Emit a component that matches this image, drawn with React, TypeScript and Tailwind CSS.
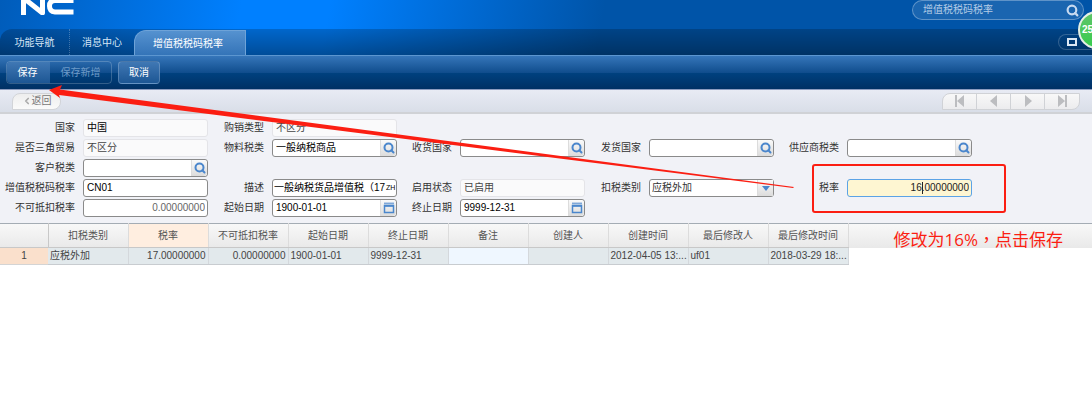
import type { ReactNode } from 'react';
import { Search, ChevronLeft } from 'lucide-react';

type FieldKind = 'text' | 'readonly' | 'lookup' | 'date' | 'select' | 'active';

type FieldDef = {
  id: string;
  label: string;
  value?: string;
  kind: FieldKind;
  align?: 'right';
  suffix?: string;
  strong?: boolean;
};

const formRows: FieldDef[][] = [
  [
    { id: 'country', label: '国家', value: '中国', kind: 'readonly', strong: true },
    { id: 'tradeType', label: '购销类型', value: '不区分', kind: 'readonly' },
  ],
  [
    { id: 'triangular', label: '是否三角贸易', value: '不区分', kind: 'readonly' },
    { id: 'materialTax', label: '物料税类', value: '一般纳税商品', kind: 'lookup' },
    { id: 'receiveCountry', label: '收货国家', kind: 'lookup' },
    { id: 'sendCountry', label: '发货国家', kind: 'lookup' },
    { id: 'supplierTax', label: '供应商税类', kind: 'lookup' },
  ],
  [{ id: 'customerTax', label: '客户税类', kind: 'lookup' }],
  [
    { id: 'taxCode', label: '增值税税码税率', value: 'CN01', kind: 'text' },
    { id: 'description', label: '描述', value: '一般纳税货品增值税（17', kind: 'text', suffix: 'ZH' },
    { id: 'status', label: '启用状态', value: '已启用', kind: 'readonly' },
    { id: 'deductType', label: '扣税类别', value: '应税外加', kind: 'select' },
    { id: 'taxRate', label: '税率', value: '16.00000000', kind: 'active', align: 'right' },
  ],
  [
    { id: 'nonDeduct', label: '不可抵扣税率', value: '0.00000000', kind: 'text', align: 'right' },
    { id: 'startDate', label: '起始日期', value: '1900-01-01', kind: 'date' },
    { id: 'endDate', label: '终止日期', value: '9999-12-31', kind: 'date' },
  ],
];

const columns = [
  '扣税类别',
  '税率',
  '不可抵扣税率',
  '起始日期',
  '终止日期',
  '备注',
  '创建人',
  '创建时间',
  '最后修改人',
  '最后修改时间',
];

const record = [
  '应税外加',
  '17.00000000',
  '0.00000000',
  '1900-01-01',
  '9999-12-31',
  '',
  '',
  '2012-04-05 13:...',
  'uf01',
  '2018-03-29 18:...',
];

const pagerIcons = [
  { name: '第一条', path: 'M1 0h2v12H1zM10 0v12L3 6z' },
  { name: '上一条', path: 'M9 0v12L2 6z' },
  { name: '下一条', path: 'M3 0v12l7-6z' },
  { name: '最后一条', path: 'M2 0v12l7-6zM9 0h2v12H9z' },
];

function CalendarIcon() {
  return (
    <svg width="12" height="12" viewBox="0 0 12 12" fill="none" stroke="#4a86cc" strokeWidth="1.5">
      <path d="M1 1.2h10" strokeWidth="1" />
      <path d="M1.5 3.5h9v7h-9z" />
      <path d="M1 3.8h10" strokeWidth="2" />
    </svg>
  );
}

function AddonButton({ label, children }: { label: string; children: ReactNode }) {
  return (
    <button
      type="button"
      aria-label={label}
      className="flex w-4 shrink-0 items-center justify-center rounded-r-sm border-l border-[#dcdcdc] bg-gradient-to-b from-[#fafafa] to-[#dcdcdc]"
    >
      {children}
    </button>
  );
}

function Field({ field }: { field: FieldDef }) {
  const { id, label, value = '', kind, align, suffix, strong } = field;
  const frame =
    kind === 'readonly'
      ? 'border-[#e4e4e8] bg-[#fafafb]'
      : kind === 'active'
        ? 'border-[#5ba3e6] bg-[#fef6d2] text-[#222]'
        : 'border-[#8a8a8a] bg-white text-black';
  const padding = align === 'right' ? 'pr-0.5 text-right' : suffix ? 'pl-px' : 'pl-[3px]';

  return (
    <>
      <label htmlFor={id} className="whitespace-nowrap text-right text-[#333]">
        {label}
      </label>
      <div
        className={`relative flex h-[18px] rounded-[3px] border ${frame} ${
          kind === 'readonly' ? (strong ? 'text-black' : 'text-[#444]') : ''
        }`}
      >
        {kind === 'select' ? (
          <>
            <select id={id} defaultValue={value} className="w-full appearance-none pl-0.5 text-[#333] outline-none">
              <option>{value}</option>
            </select>
            <span className="pointer-events-none absolute inset-y-0 right-0 flex w-4 items-center justify-center border-l border-[#dcdcdc] bg-gradient-to-b from-[#fafafa] to-[#dcdcdc]">
              <svg width="8" height="5" viewBox="0 0 8 5" fill="#4a86cc">
                <path d="M0 0h8L4 5z" />
              </svg>
            </span>
          </>
        ) : (
          <input
            id={id}
            defaultValue={value}
            readOnly={kind === 'readonly'}
            className={`min-w-0 flex-1 outline-none ${padding} ${id === 'nonDeduct' ? 'text-[#666]' : ''}`}
          />
        )}
        {suffix && <span className="w-[10px] shrink-0 text-[7px] leading-4">{suffix}</span>}
        {kind === 'lookup' && (
          <AddonButton label={`选择${label}`}>
            <Search size={12} strokeWidth={4} className="text-[#4a86cc]" />
          </AddonButton>
        )}
        {kind === 'date' && (
          <AddonButton label={`选择${label}`}>
            <CalendarIcon />
          </AddonButton>
        )}
        {kind === 'active' && (
          <>
            <span className="absolute right-12 top-0.5 h-3 w-px bg-[#222]" />
            <span className="pointer-events-none absolute -left-9 -top-4 h-[49px] w-[194px] rounded-[3px] border-2 border-[#fb1e12]" />
          </>
        )}
      </div>
    </>
  );
}

function Header() {
  return (
    <header className="bg-[linear-gradient(100deg,#005cba,#0080ff_22%,#0080ff_30%,#0054a8_55%)]">
      <div className="flex h-[29px] items-start justify-between pl-5 pr-2">
        <svg width="54" height="15" viewBox="0 0 54 15" fill="none" stroke="#fff" strokeWidth="5" aria-label="NC">
          <path d="M3.5 15V-2L22.5 13V-2" strokeLinejoin="round" />
          <path d="M53.500 0.500H35Q29.500 0.500 29.500 6T35 12H53.500" />
        </svg>
        <div className="flex h-5 w-[172px] items-center rounded-full border border-white/30 bg-white/10 pl-2.5 pr-1">
          <input
            aria-label="搜索"
            defaultValue="增值税税码税率"
            className="min-w-0 flex-1 text-[#b4cce6] outline-none"
          />
          <button type="button" aria-label="搜索">
            <Search size={13} strokeWidth={4} className="text-[#c8daf0]" />
          </button>
        </div>
      </div>

      <div className="flex h-[26px] items-stretch rounded-tl-xl bg-gradient-to-b from-black/20 to-black/40">
        <nav className="flex flex-1 items-stretch text-[#d6e6f6]">
          <a href="#nav" className="flex w-[69px] items-center justify-center pt-0.5">
            功能导航
          </a>
          <a href="#messages" className="flex w-[65px] items-center justify-center border-l border-dotted border-white/25 pt-0.5">
            消息中心
          </a>
          <a
            href="#tax"
            className="mt-px flex w-28 items-center justify-center rounded-tl-xl border border-b-0 border-[#6ea3d8] bg-gradient-to-b from-[#5592d0] to-[#3474b8] pr-1 pt-0.5 text-white"
          >
            增值税税码税率
          </a>
        </nav>
        <button
          type="button"
          aria-label="还原窗口"
          className="mt-[5px] flex h-4 w-[34px] items-center rounded-l-full border border-r-0 border-white/20 pl-2"
        >
          <span className="h-2 w-[10px] border-2 border-[#dce8f4]" />
        </button>
      </div>
    </header>
  );
}

function Toolbar() {
  return (
    <div className="flex h-[34px] items-center gap-1.5 border-t border-[#5c96d0] bg-[linear-gradient(#3676ba,#0f4c8c_52%,#00417f_52%,#003064)] pl-1.5 text-white">
      <div className="flex h-[23px] rounded border border-white/20">
        <button type="button" className="w-[43px] rounded-l bg-gradient-to-b from-[#4078b4] to-[#1c5694] pr-0.5">
          保存
        </button>
        <button type="button" disabled className="w-[61px] text-[#6f9bc8]">
          保存新增
        </button>
      </div>
      <button
        type="button"
        className="h-[23px] w-[42px] rounded border border-white/20 bg-gradient-to-b from-[#4078b4] to-[#1c5694]"
      >
        取消
      </button>
    </div>
  );
}

function RecordBar() {
  return (
    <div className="flex h-[25px] items-center justify-between border-b-2 border-t border-b-[#d0d2d6] border-t-[#8c9cc0] bg-gradient-to-b from-[#e8ebf4] to-[#d9dee8] px-3">
      <button
        type="button"
        className="flex h-[17px] w-[49px] items-center justify-center rounded-tl-lg rounded-br-lg rounded-tr-lg border border-[#d2d4d8] bg-gradient-to-b from-[#eeeeee] to-[#fafafa] text-[#777]"
      >
        <ChevronLeft size={10} strokeWidth={4} className="text-[#aaa]" />
        返回
      </button>
      <div className="flex h-[17px] divide-x divide-[#d0d2d6] overflow-hidden rounded-tl-lg rounded-br-lg border border-[#d0d2d6] bg-gradient-to-b from-[#f8f8f8] to-[#ececee]">
        {pagerIcons.map((icon) => (
          <button key={icon.name} type="button" aria-label={icon.name} className="flex w-[34px] items-center justify-center">
            <svg width="12" height="12" viewBox="0 0 12 12" fill="#bcbdc0">
              <path d={icon.path} />
            </svg>
          </button>
        ))}
      </div>
    </div>
  );
}

function RecordTable() {
  return (
    <table className="w-full table-fixed border-collapse border-t border-[#a4acb4] text-[#444]">
      <colgroup>
        <col className="w-12" />
        {columns.map((name) => (
          <col key={name} className="w-20" />
        ))}
        <col />
      </colgroup>
      <thead>
        <tr className="h-6 bg-gradient-to-b from-[#f8f8f8] to-[#e9e9e9]">
          <th className="border-b border-r border-[#c8c8c8]" />
          {columns.map((name) => (
            <th
              key={name}
              className={`whitespace-nowrap border-b border-r border-b-[#c8c8c8] border-r-[#dcdcdc] font-normal text-[#555] ${
                name === '税率' ? 'bg-[#ffeee0]' : ''
              }`}
            >
              {name}
            </th>
          ))}
          <th className="relative">
            <span className="absolute left-[45px] top-1 whitespace-nowrap font-['Open_Sans','Noto_Sans_CJK_TC',sans-serif] text-[17px] font-normal leading-6 text-[#fb1e12]">
              修改为16%，点击保存
            </span>
          </th>
        </tr>
      </thead>
      <tbody>
        <tr className="h-[17px]">
          <td className="border-b border-[#d4d4d4] bg-[#fae0cc] text-center">1</td>
          {record.map((cell, index) => (
            <td
              key={index}
              className={`whitespace-nowrap border-b border-r border-b-[#c8ccd0] border-r-[#d4d8dc] px-0.5 ${
                index === 5 ? 'bg-[#eff7ff]' : 'bg-[#e2e9ec]'
              } ${index === 1 || index === 2 ? 'text-right' : ''}`}
            >
              {cell}
            </td>
          ))}
          <td />
        </tr>
      </tbody>
    </table>
  );
}

export default function App() {
  return (
    <div className="relative min-h-screen overflow-hidden bg-white font-['Liberation_Sans','Noto_Sans_CJK_SC',sans-serif] text-[10px] leading-4">
      <Header />
      <Toolbar />
      <RecordBar />

      <form className="flex flex-col gap-0.5 bg-[#f1f2f7] pb-1.5 pt-[5px]">
        {formRows.map((row) => (
          <div
            key={row[0].id}
            className="grid grid-cols-[75px_125px_48px_125px_47px_125px_48px_125px_57px_125px] items-center gap-x-2"
          >
            {row.map((field) => (
              <Field key={field.id} field={field} />
            ))}
          </div>
        ))}
      </form>

      <RecordTable />

      <div className="absolute -right-6 top-[11px] flex size-[38px] items-center rounded-full border-2 border-[#e4efe4] bg-gradient-to-b from-[#5cc468] to-[#35cc4c] pl-0.5 font-bold text-white shadow">
        25
      </div>

      <svg width="800" height="200" className="pointer-events-none absolute left-0 top-0" fill="#fb1e12">
        <path d="M49 90L62 85L60 89.500L794 187L793 188L59 95L60 98Z" />
      </svg>
    </div>
  );
}
